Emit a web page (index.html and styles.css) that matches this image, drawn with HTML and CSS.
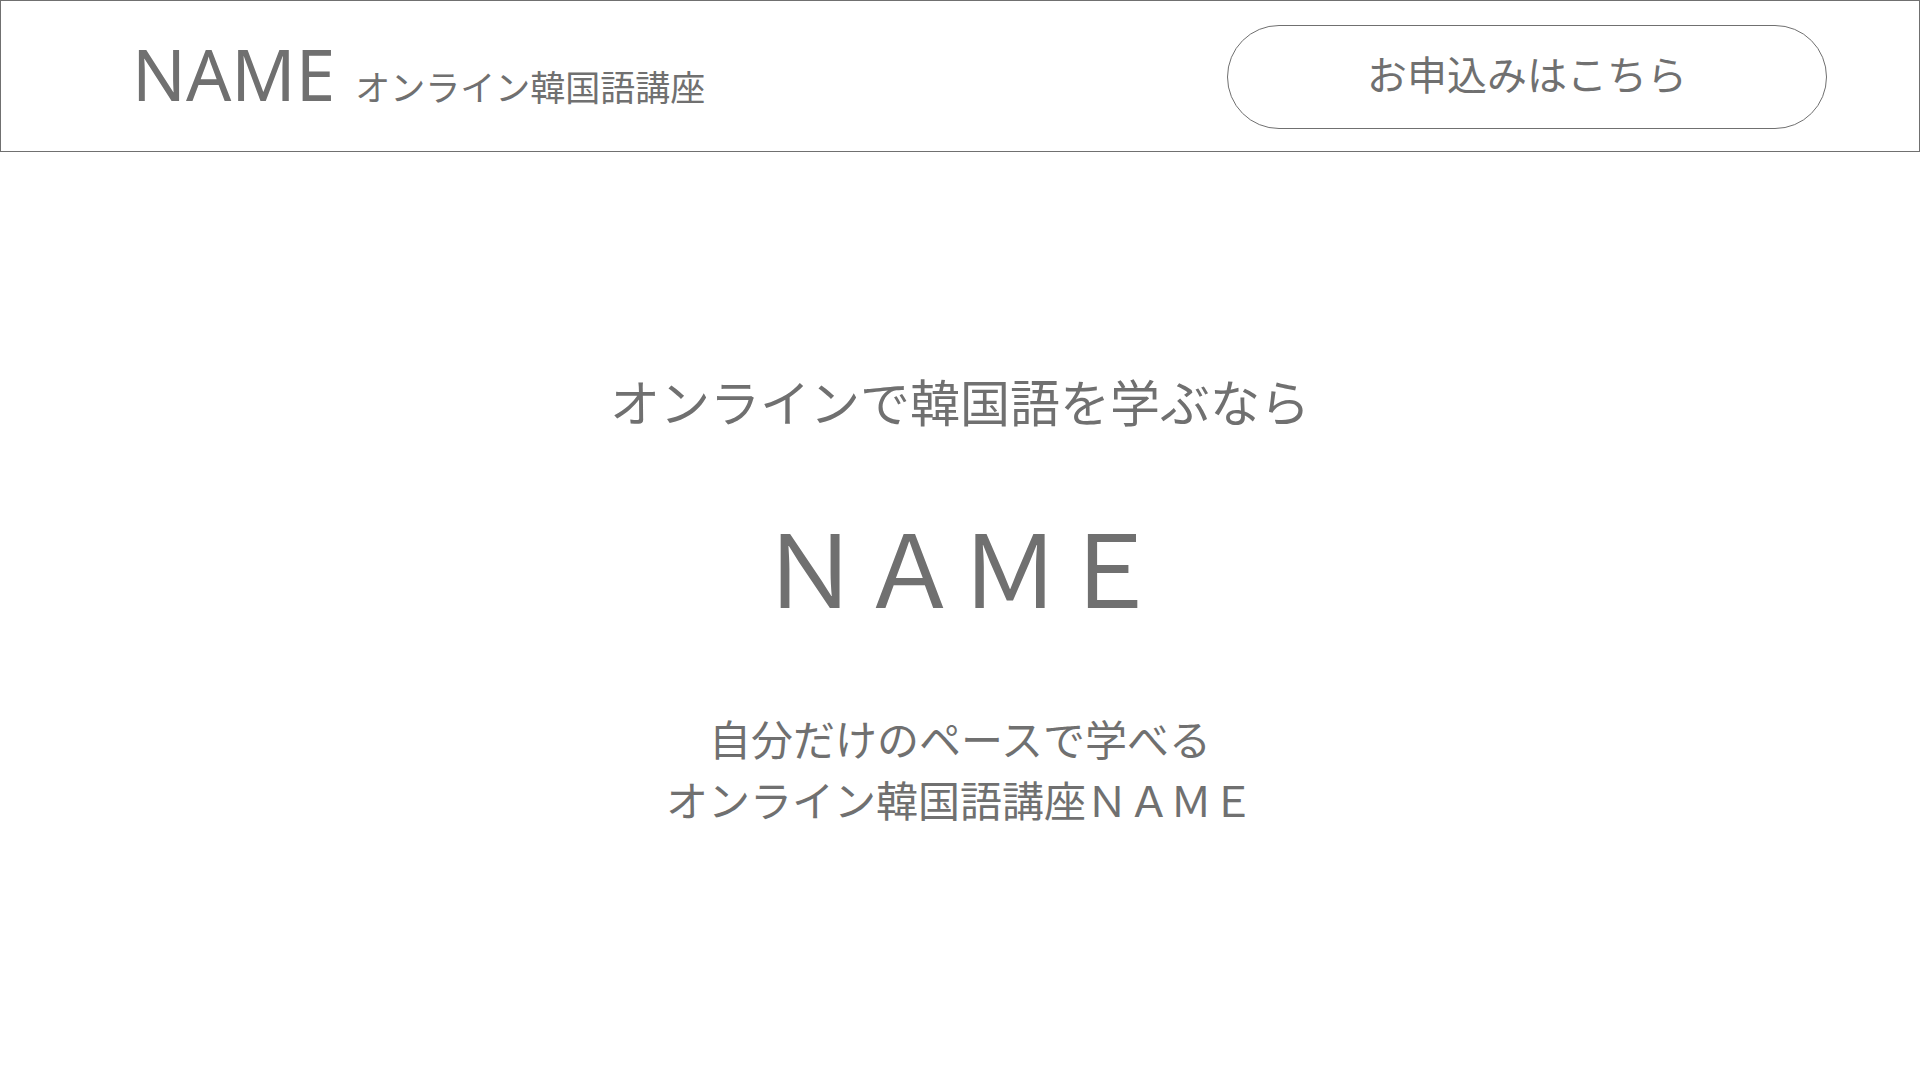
FILE: index.html
```html
<!DOCTYPE html>
<html lang="ja">
<head>
<meta charset="utf-8">
<title>NAME オンライン韓国語講座</title>
<link rel="stylesheet" href="styles.css">
</head>
<body>
<header class="site-header">
  <div class="brand">
    <span class="brand-name">NAME</span>
    <span class="brand-sub">オンライン韓国語講座</span>
  </div>
  <a class="apply-btn" href="#">お申込みはこちら</a>
</header>
<main class="hero">
  <p class="hero-lead">オンラインで韓国語を学ぶなら</p>
  <h1 class="hero-title">ＮＡＭＥ</h1>
  <p class="hero-desc">自分だけのペースで学べる<br>オンライン韓国語講座ＮＡＭＥ</p>
</main>
</body>
</html>
```
FILE: styles.css
```css
* { box-sizing: border-box; }
html, body {
  margin: 0;
  padding: 0;
  background: #ffffff;
}
body {
  color: #707070;
  font-family: "Noto Sans CJK JP", "Noto Sans", sans-serif;
  width: 1920px;
  height: 1080px;
  overflow: hidden;
}
.site-header {
  height: 152px;
  border: 1px solid #707070;
  display: flex;
  align-items: center;
  justify-content: space-between;
  padding: 0 92px 0 131px;
}
.brand {
  display: flex;
  align-items: baseline;
  gap: 20px;
  margin-top: -6px;
}
.brand-name {
  font-family: "Noto Sans", "Open Sans", sans-serif;
  font-size: 71px;
  line-height: 1;
}
.brand-sub {
  font-size: 35px;
  line-height: 1;
}
.apply-btn {
  width: 600px;
  height: 104px;
  margin-top: 2px;
  border: 1px solid #707070;
  border-radius: 52px;
  display: flex;
  align-items: center;
  justify-content: center;
  color: #707070;
  text-decoration: none;
  font-size: 40px;
  line-height: 1;
  padding-bottom: 8px;
}
.hero {
  display: flex;
  flex-direction: column;
  align-items: center;
  text-align: center;
}
.hero-lead {
  margin: 223px 0 0;
  font-size: 50px;
  line-height: 50px;
}
.hero-title {
  margin: 90px 0 0;
  font-size: 100px;
  font-weight: 400;
  line-height: 100px;
}
.hero-desc {
  margin: 92px 0 0;
  font-size: 42px;
  line-height: 61px;
}
```
